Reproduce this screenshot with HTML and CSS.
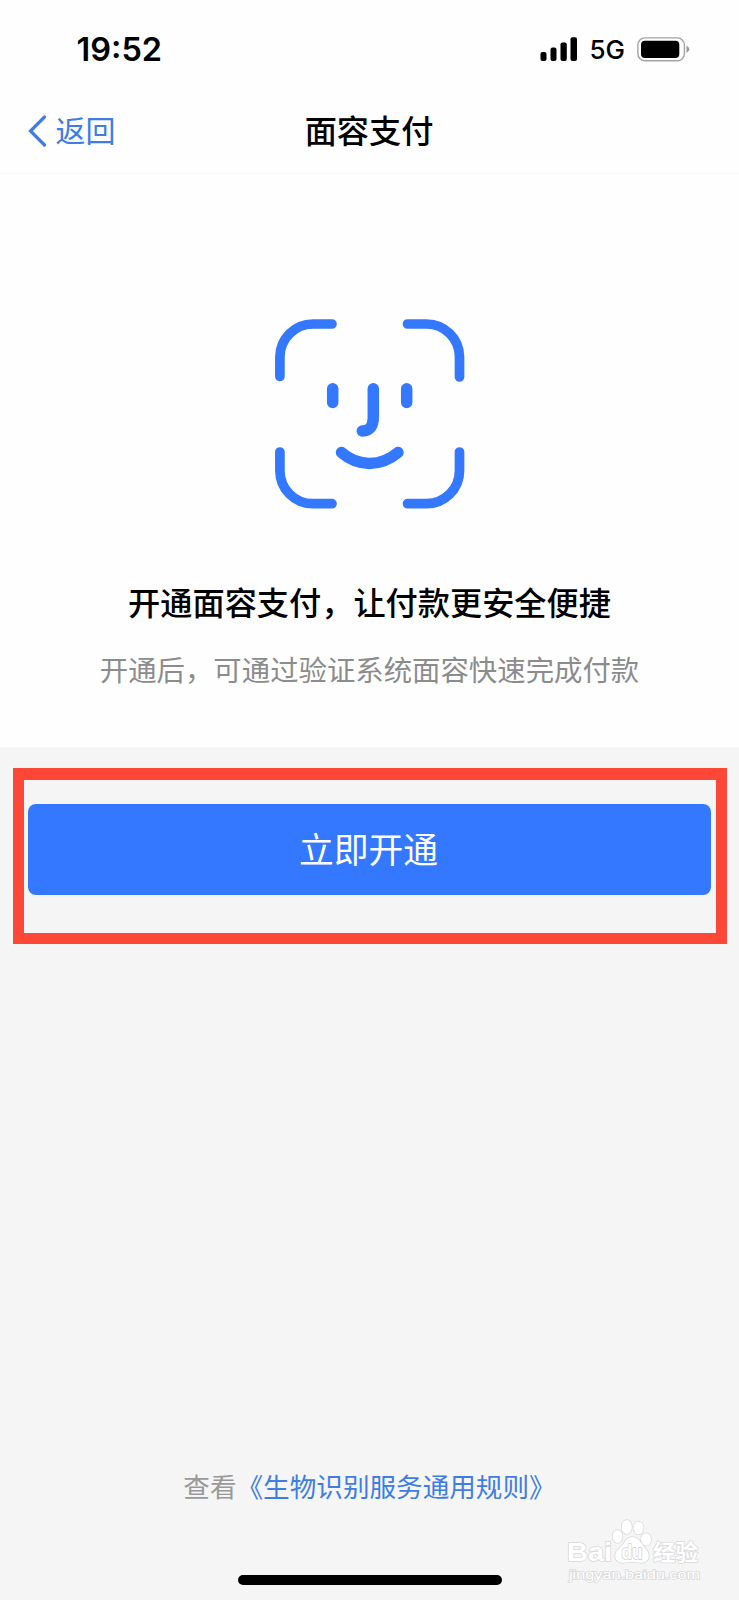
FILE: index.html
```html
<!DOCTYPE html>
<html lang="zh-CN">
<head>
<meta charset="utf-8">
<title>面容支付</title>
<link rel="stylesheet" href="styles.css">
</head>
<body>
<div class="screen">
  <header class="status">
    <span class="time">19:52</span>
    <div class="indicators">
      <svg class="signal" width="38" height="25" viewBox="0 0 38 25">
        <rect x="0.5" y="15" width="6" height="9" rx="2"/>
        <rect x="10.5" y="10.5" width="6" height="13.500" rx="2"/>
        <rect x="20.500" y="5.500" width="6.300" height="18.500" rx="2"/>
        <rect x="30.500" y="0.300" width="6.500" height="23.700" rx="2"/>
      </svg>
      <span class="network">5G</span>
      <svg class="battery" width="53" height="25" viewBox="0 0 53 25">
        <rect x="0.900" y="0.900" width="46.500" height="22.800" rx="7" fill="none" stroke="#a3a3a3" stroke-width="1.400"/>
        <rect x="4" y="3.700" width="38.300" height="17.300" rx="4"/>
        <path d="M49.500 8.500Q52.300 10 52.300 12.300T49.500 16Z" fill="#999"/>
      </svg>
    </div>
  </header>
  <nav class="navbar">
    <a class="back">
      <svg width="19" height="32" viewBox="0 0 19 32"><path d="M16.500 2 2.500 16 16.500 30" fill="none" stroke="#3f7de3" stroke-width="3.200" stroke-linecap="round"/></svg>
      <span>返回</span>
    </a>
    <h1 class="title">面容支付</h1>
  </nav>
  <main class="intro">
    <svg class="face" width="190" height="190" viewBox="0 0 190 190" fill="none" stroke="#3478ff" stroke-linecap="round">
      <path stroke-width="9.700" d="M4.900 57.500V38A33 33 0 0 1 38 5H57M132.500 5H151.500A33 33 0 0 1 184.500 38V58M184.500 133V151.700A33 33 0 0 1 151.500 184.700H132.500M57 184.700H38A33 33 0 0 1 4.900 151.700V133"/>
      <path stroke-width="11.500" d="M57.700 69.700V83.500M131.700 69.700V83.500M98.300 69.700V98Q98.300 112 87.300 112M66.500 133.500C83 148 106 148 123 133.500"/>
    </svg>
    <h2 class="headline">开通面容支付，让付款更安全便捷</h2>
    <p class="sub">开通后，可通过验证系统面容快速完成付款</p>
  </main>
  <section class="highlight">
    <button class="open">立即开通</button>
  </section>
  <footer class="footer">
    <p class="terms">查看<a>《生物识别服务通用规则》</a></p>
    <div class="home"></div>
  </footer>
  <div class="watermark">
    <svg width="140" height="66" viewBox="0 0 140 66">
      <g class="mark">
        <text x="0" y="42.500" font-size="26" textLength="45" lengthAdjust="spacingAndGlyphs">Bai</text>
        <ellipse cx="50.500" cy="18.500" rx="5" ry="6.500"/>
        <ellipse cx="59.800" cy="9" rx="5" ry="7"/>
        <ellipse cx="71.500" cy="10" rx="5" ry="6.500"/>
        <ellipse cx="79" cy="21.500" rx="5" ry="6.200"/>
        <path d="M65 19Q71 19 74 25L81 34Q84 44 74 45Q65 43 56 45Q46 44 49 34L57 25Q60 19 65 19Z"/>
        <text class="du" x="54.500" y="41" font-size="20" textLength="21" lengthAdjust="spacingAndGlyphs">du</text>
        <text x="86" y="41.500" font-size="22" textLength="45" lengthAdjust="spacingAndGlyphs">经验</text>
        <text class="site" x="2" y="61" font-size="13" textLength="131" lengthAdjust="spacingAndGlyphs">jingyan.baidu.com</text>
      </g>
    </svg>
  </div>
</div>
</body>
</html>
```
FILE: styles.css
```css
* { box-sizing: border-box; margin: 0; padding: 0; }
body { font-family: "Noto Sans CJK SC", sans-serif; background: #f5f5f5; color: #000; }
.screen { position: relative; width: 739px; height: 1600px; display: flex; flex-direction: column; overflow: hidden; }
.status { height: 90px; flex: none; padding: 9px 49px 0 76.500px; background: #fefefe; display: flex; align-items: center; justify-content: space-between; font-family: Inter, sans-serif; }
.time { font-size: 32.5px; font-weight: 600; line-height: 40px; }
.indicators { display: flex; align-items: center; }
.network { margin: 1px 12px 0 11px; font-size: 26px; font-weight: 450; line-height: 32px; }
.navbar { height: 84px; flex: none; background: #fefefe; border-bottom: 1px solid #f7f7f7; display: grid; grid-template-columns: 1fr auto 1fr; align-items: center; padding: 0 29px 5px 28px; }
.back { display: flex; align-items: center; gap: 8.500px; color: #3f7de3; font-size: 30px; line-height: 44px; }
.back svg { margin-top: 3px; }
.title { font-size: 32.2px; line-height: 48px; font-weight: 500; }
.intro { height: 573px; flex: none; background: #fefefe; display: flex; flex-direction: column; align-items: center; padding-top: 145px; }
.face { flex: none; }
.headline { margin-top: 68px; font-size: 32.2px; line-height: 48px; font-weight: 500; white-space: nowrap; }
.sub { margin-top: 24px; font-size: 28.4px; line-height: 40px; color: #8c8c8c; white-space: nowrap; }
.highlight { flex: none; margin: 21px 12px 0 13px; height: 176px; border: 11.500px solid #fe4737; border-top-width: 12px; padding: 24px 5px 0 4px; }
.open { display: block; width: 100%; height: 91px; border: 0; border-radius: 8px; background: #3478ff; color: #fff; font-family: inherit; font-size: 34.8px; line-height: 89px; padding: 0 2px 2px 0; }
.footer { margin-top: auto; height: 133px; display: flex; flex-direction: column; align-items: center; justify-content: space-between; padding-bottom: 15px; }
.terms { font-size: 26.6px; line-height: 38px; color: #999; white-space: nowrap; }
.terms a { color: #3f7de3; }
.home { width: 264px; height: 10px; border-radius: 5px; background: #000; }
.watermark { position: absolute; left: 567px; top: 1518px; }
.mark { fill: #fff; stroke: #d9d9d9; stroke-width: 1.500; paint-order: stroke; font-family: "Liberation Sans", "Noto Sans CJK SC", sans-serif; font-weight: 700; }
.mark .du { fill: #fff; stroke: #cfcfcf; }
.mark .site { font-weight: 400; }
```
